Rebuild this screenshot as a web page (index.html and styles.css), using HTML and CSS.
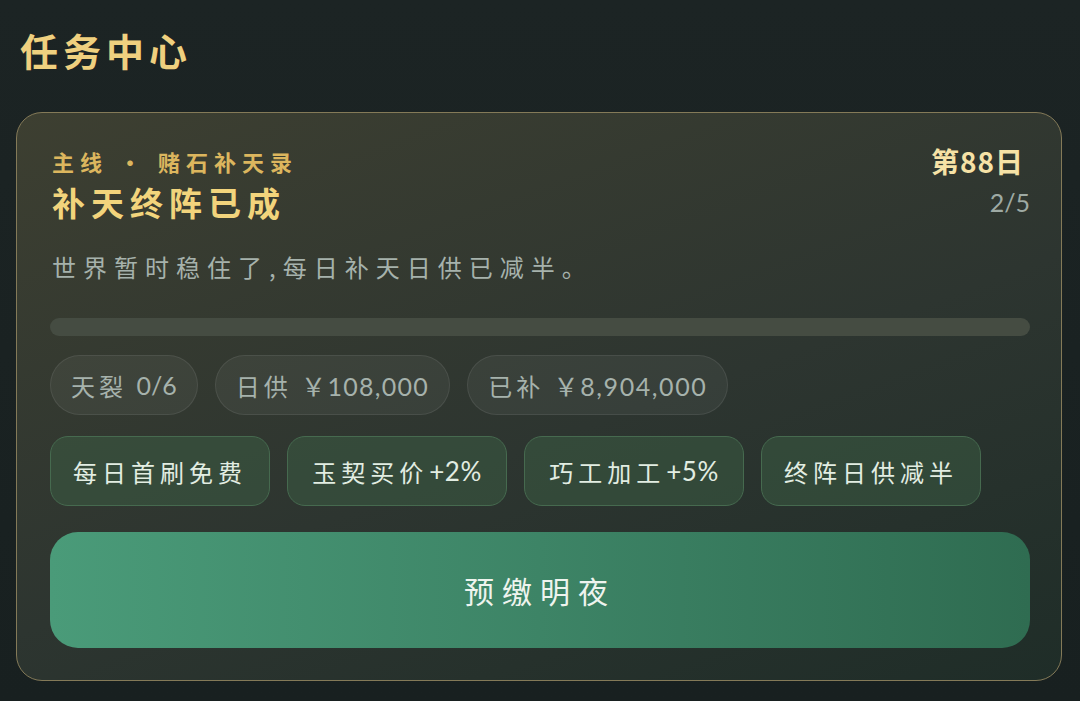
FILE: index.html
```html
<!DOCTYPE html>
<html lang="zh-CN">
<head>
  <meta charset="UTF-8">
  <meta name="viewport" content="width=device-width, initial-scale=1.0">
  <title>任务中心</title>
  <link rel="stylesheet" href="styles.css">
</head>
<body>
  <div class="page">
    <h1 class="pageTitle">任务中心</h1>

    <!-- 任务卡片 -->
    <section class="questCard">
      <div class="questHead">
        <div class="headLeft">
          <p class="questLine">主线 · 赌石补天录</p>
          <h2 class="questName">补天终阵已成</h2>
        </div>
        <div class="headRight">
          <p class="questDay">第88日</p>
          <p class="questStep">2/5</p>
        </div>
      </div>

      <p class="questDesc">世界暂时稳住了,每日补天日供已减半。</p>

      <div class="bar"><div class="barFill" style="width: 0%"></div></div>

      <ul class="stats">
        <li>天裂 <span class="num">0/6</span></li>
        <li>日供 <span class="num">￥108,000</span></li>
        <li>已补 <span class="num">￥8,904,000</span></li>
      </ul>

      <ul class="perks">
        <li>每日首刷免费</li>
        <li>玉契买价<span class="num">+2%</span></li>
        <li>巧工加工<span class="num">+5%</span></li>
        <li>终阵日供减半</li>
      </ul>

      <a href="#" class="mainBtn">预缴明夜</a>
    </section>
  </div>
</body>
</html>
```

FILE: styles.css
```css
/* reset */
* {
  margin: 0;
  padding: 0;
  box-sizing: border-box;
}
ul, li {
  list-style: none;
}
a {
  text-decoration: none;
}

body {
  width: 1080px;
  height: 701px;
  overflow: hidden;
  background: linear-gradient(180deg, #1c2424 0%, #182020 100%);
  font-family: "Noto Sans CJK SC", "Noto Sans", sans-serif;
}

.page {
  padding: 20px 18px 0 16px;
}

.pageTitle {
  padding-left: 4px;
  font-size: 38px;
  line-height: 60px;
  font-weight: 700;
  letter-spacing: 5px;
  color: #efd07f;
}

/* 卡片 */
.questCard {
  margin-top: 32px;
  width: 1046px;
  padding: 30px 31px 32px 33px;
  border: 1.5px solid #847a58;
  border-radius: 26px;
  background: linear-gradient(160deg, #3d3f31 0%, #2d3530 55%, #1f2d28 100%);
}

.questHead {
  display: flex;
  justify-content: space-between;
}

.questLine {
  padding-left: 2px;
  font-size: 22px;
  line-height: 36px;
  font-weight: 700;
  letter-spacing: 6px;
  color: #dcb65e;
}

.questName {
  padding-left: 2px;
  font-size: 33px;
  line-height: 46px;
  font-weight: 700;
  letter-spacing: 6px;
  color: #f2d47c;
}

.headRight {
  text-align: right;
}

.questDay {
  padding-right: 6px;
  font-size: 28px;
  line-height: 36px;
  font-weight: 700;
  letter-spacing: 1px;
  color: #f6e2a6;
}

.questStep {
  font-family: "Lato", "Noto Sans CJK SC", sans-serif;
  font-size: 25px;
  line-height: 46px;
  color: #9eaaa4;
}

.questDesc {
  padding-left: 2px;
  margin-top: 24px;
  font-size: 24px;
  line-height: 36px;
  letter-spacing: 7px;
  color: #a6b2ac;
}

/* 进度条 */
.bar {
  margin-top: 33px;
  height: 18px;
  border-radius: 9px;
  background: #454c42;
  overflow: hidden;
}
.barFill {
  height: 100%;
  background: #5aa583;
}

.num {
  font-family: "Lato", "Noto Sans CJK SC", sans-serif;
  letter-spacing: 0;
}

.stats {
  display: flex;
  gap: 17px;
  margin-top: 19px;
}

.stats li {
  height: 60px;
  padding: 0 20px;
  display: flex;
  align-items: center;
  border: 1.5px solid rgba(255, 255, 255, 0.08);
  border-radius: 30px;
  background: rgba(255, 255, 255, 0.05);
  font-size: 24px;
  letter-spacing: 4px;
  color: #a6b2ac;
  white-space: pre;
}

.stats .num {
  font-size: 25px;
  letter-spacing: 1.3px;
}

.stats li:first-child .num {
  letter-spacing: 0;
}

.stats li:last-child .num {
  letter-spacing: 1.6px;
}

.perks {
  display: flex;
  gap: 17px;
  margin-top: 21px;
}

.perks li {
  width: 220px;
  height: 70px;
  display: flex;
  align-items: center;
  justify-content: center;
  border: 1.5px solid #466a4f;
  border-radius: 18px;
  background: rgba(62, 100, 72, 0.45);
  font-size: 24px;
  letter-spacing: 5px;
  color: #e2ede2;
}

.perks .num {
  font-size: 26px;
  padding-left: 1px;
  letter-spacing: 0.5px;
}

.mainBtn {
  margin-top: 26px;
  height: 116px;
  display: flex;
  align-items: center;
  justify-content: center;
  border-radius: 28px;
  background: linear-gradient(90deg, #4a9b79 0%, #3d8466 50%, #2f6c51 100%);
  font-size: 30px;
  letter-spacing: 8px;
  color: #eef4ee;
}
```
